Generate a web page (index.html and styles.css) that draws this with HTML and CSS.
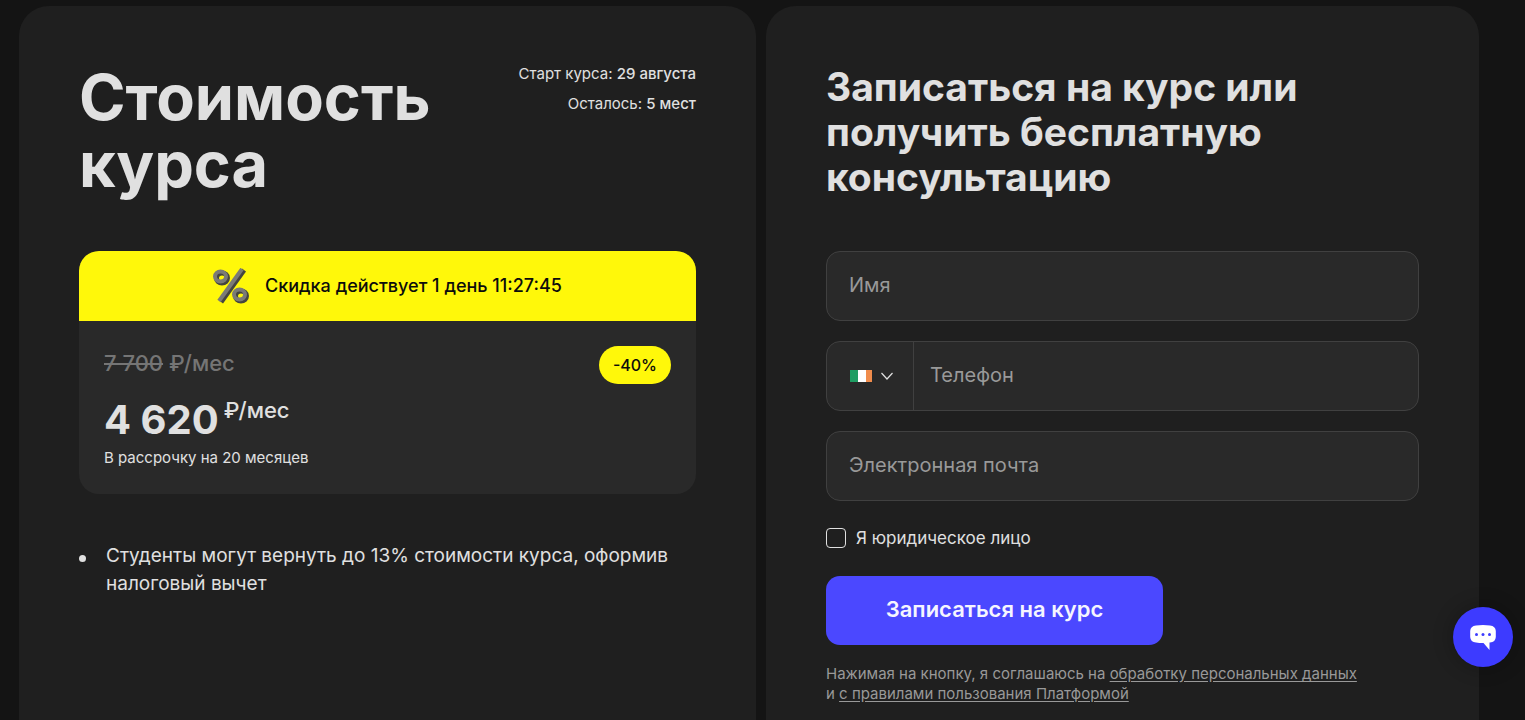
FILE: index.html
```html
<!DOCTYPE html>
<html lang="ru">
<head>
<meta charset="utf-8">
<meta name="viewport" content="width=device-width, initial-scale=1">
<title>Стоимость курса</title>
<link rel="stylesheet" href="styles.css">
</head>
<body>
<main class="page">
  <section class="panel panel-price">
    <header class="price-head">
      <h1 class="title">Стоимость курса</h1>
      <div class="facts">
        <p>Старт курса: <b>29 августа</b></p>
        <p>Осталось: <b>5 мест</b></p>
      </div>
    </header>
    <div class="offer">
      <div class="offer-banner">
        <svg class="percent" viewBox="0 0 36 36" aria-hidden="true">
          <g fill="none" stroke="#45453f" stroke-width="5">
            <ellipse cx="9" cy="10" rx="5.500" ry="5"/><ellipse cx="28" cy="28" rx="5.500" ry="5"/>
            <path d="M31 2 8 34"/>
          </g>
          <g fill="none" stroke="#7b7b76" stroke-width="4">
            <ellipse cx="7.500" cy="8.500" rx="5.500" ry="5"/><ellipse cx="26.500" cy="26.500" rx="5.500" ry="5"/>
            <path d="M29 1 6 33"/>
          </g>
        </svg>
        <span>Скидка действует 1 день 11:27:45</span>
      </div>
      <div class="offer-body">
        <div>
          <p class="old-price"><s>7 700</s> ₽/мес</p>
          <p class="new-price">4 620<span class="unit">₽/мес</span></p>
          <p class="term">В рассрочку на 20 месяцев</p>
        </div>
        <span class="discount">-40%</span>
      </div>
    </div>
    <ul class="notes">
      <li>Студенты могут вернуть до 13% стоимости курса, оформив налоговый вычет</li>
    </ul>
  </section>

  <section class="panel panel-form">
    <h2 class="subtitle">Записаться на курс или получить бесплатную консультацию</h2>
    <form class="form">
      <input class="field" type="text" name="name" placeholder="Имя" aria-label="Имя">
      <div class="field phone">
        <button class="country" type="button" aria-label="Код страны: Ирландия">
          <svg class="flag" viewBox="0 0 22 12" aria-hidden="true">
            <path fill="#1f9d63" d="M0 0h8v12H0z"/><path fill="#fff" d="M8 0h8v12H8z"/><path fill="#f08c4c" d="M16 0h6v12h-6z"/>
          </svg>
          <svg class="chevron" viewBox="0 0 14 10" aria-hidden="true"><path d="M1.500 2 7 8l5.500-6" fill="none" stroke="#e0e0e0" stroke-width="1.200"/></svg>
        </button>
        <input class="phone-input" type="tel" name="phone" placeholder="Телефон" aria-label="Телефон">
      </div>
      <input class="field" type="email" name="email" placeholder="Электронная почта" aria-label="Электронная почта">
      <label class="legal"><input class="check" type="checkbox" name="legal">Я юридическое лицо</label>
      <button class="submit" type="submit">Записаться на курс</button>
      <p class="consent">Нажимая на кнопку, я соглашаюсь на <a href="#privacy">обработку персональных данных</a> <span class="line">и <a href="#rules">с правилами пользования Платформой</a></span></p>
    </form>
  </section>
</main>
<button class="chat" type="button" aria-label="Открыть чат">
  <svg viewBox="0 0 26 26" aria-hidden="true">
    <path fill="#fff" d="M6 1.500Q13 .500 20 1.500 25.500 2 25.800 7v6q-.300 5-5.800 5.500l-.500.100V26l-6-7Q9 19 6 18.500.500 18 .200 13V7Q.500 2 6 1.500z"/>
    <g fill="#3d3bff"><circle cx="6.500" cy="10.500" r="1.500"/><circle cx="13" cy="10.500" r="1.500"/><circle cx="19.500" cy="10.500" r="1.500"/></g>
  </svg>
</button>
</body>
</html>
```
FILE: styles.css
```css
* { box-sizing: border-box; }
body {
  margin: 0;
  background: #141414;
  color: #e0e0e0;
  font-family: Inter, Roboto, "Liberation Sans", sans-serif;
}
h1, h2, p, ul { margin: 0; padding: 0; }
button, input { font: inherit; color: inherit; }
button { cursor: pointer; }

.page {
  display: grid;
  grid-template-columns: 737fr 713fr;
  gap: 10px;
  min-height: 100vh;
  padding: 6px 46px 0 19px;
}
.panel {
  min-width: 0;
  padding: 58px 60px 16px;
  border-radius: 30px 30px 0 0;
  background: #1f1f1f;
}

.price-head {
  display: flex;
  justify-content: space-between;
  min-height: 187px;
}
.title {
  max-width: 400px;
  font-size: 63px;
  line-height: 67px;
  font-weight: 700;
}
.facts {
  flex: none;
  font-size: 15px;
  line-height: 20px;
  text-align: right;
}
.facts p { margin-bottom: 10px; }
.facts b { font-weight: 500; }

.offer {
  overflow: hidden;
  border-radius: 20px;
  background: #292929;
}
.offer-banner {
  display: flex;
  align-items: center;
  justify-content: center;
  gap: 16px;
  height: 70px;
  background: #fff80a;
  color: #0c0c0c;
  font-size: 18px;
  line-height: 24px;
  font-weight: 500;
}
.percent { width: 36px; height: 36px; }
.offer-body {
  display: flex;
  justify-content: space-between;
  align-items: flex-start;
  padding: 25px;
}
.old-price {
  color: #757575;
  font-size: 22px;
  line-height: 34px;
  font-weight: 500;
}
.new-price {
  display: flex;
  align-items: flex-start;
  gap: 5px;
  margin-top: 13px;
  font-size: 40px;
  line-height: 53px;
  font-weight: 700;
}
.unit {
  font-size: 22px;
  line-height: 34px;
  font-weight: 500;
}
.term { font-size: 15px; line-height: 23px; }
.discount {
  padding: 0 14px;
  border-radius: 19px;
  background: #fff80a;
  color: #0c0c0c;
  font-size: 16px;
  line-height: 38px;
  font-weight: 500;
}

.notes {
  margin-top: 48px;
  list-style: none;
  font-size: 19px;
  line-height: 28px;
}
.notes li { display: flex; gap: 20px; }
.notes li::before {
  content: "";
  flex: none;
  width: 7px;
  height: 7px;
  margin-top: 13px;
  border-radius: 50%;
  background: #e0e0e0;
}

.subtitle {
  min-height: 187px;
  max-width: 500px;
  font-size: 39px;
  line-height: 45px;
  font-weight: 700;
}
.form { display: flex; flex-direction: column; align-items: flex-start; }
.field {
  width: 100%;
  height: 70px;
  margin-bottom: 20px;
  padding: 0 22px 2px;
  border: 1px solid #404040;
  border-radius: 14px;
  background: #292929;
  font-size: 20px;
}
.field::placeholder, .phone-input::placeholder { color: #999; opacity: 1; }
.phone { display: flex; padding: 0; }
.country {
  display: flex;
  align-items: center;
  gap: 8px;
  width: 87px;
  padding: 0 0 0 23px;
  border: 0;
  border-right: 1px solid #404040;
  background: none;
}
.flag { width: 22px; height: 12px; }
.chevron { width: 14px; height: 10px; }
.phone-input {
  flex: 1;
  min-width: 0;
  padding: 0 16px 2px;
  border: 0;
  background: none;
}
.legal {
  display: flex;
  align-items: center;
  gap: 10px;
  margin-top: 5px;
  font-size: 17px;
  line-height: 24px;
}
.check {
  appearance: none;
  width: 20px;
  height: 20px;
  margin: 0;
  border: 1px solid #e0e0e0;
  border-radius: 4px;
}
.check:checked { background: #4b48ff; }
.submit {
  height: 69px;
  width: 337px;
  max-width: 100%;
  margin-top: 26px;
  padding: 0 16px 4px;
  border: 0;
  border-radius: 14px;
  background: #4b48ff;
  color: #f5f5ff;
  font-size: 22px;
  font-weight: 600;
}
.consent {
  margin-top: 19px;
  color: #999;
  font-size: 15px;
  line-height: 20px;
}
.consent .line { display: block; }
.consent a { color: inherit; text-underline-offset: 2px; }

.chat {
  position: fixed;
  right: 12px;
  bottom: 53px;
  display: grid;
  place-items: center;
  width: 60px;
  height: 60px;
  padding: 0;
  border: 0;
  border-radius: 50%;
  background: #3d3bff;
  box-shadow: 0 0 16px 6px rgba(0, 0, 0, 0.15);
}
.chat svg { width: 26px; height: 26px; }
```
